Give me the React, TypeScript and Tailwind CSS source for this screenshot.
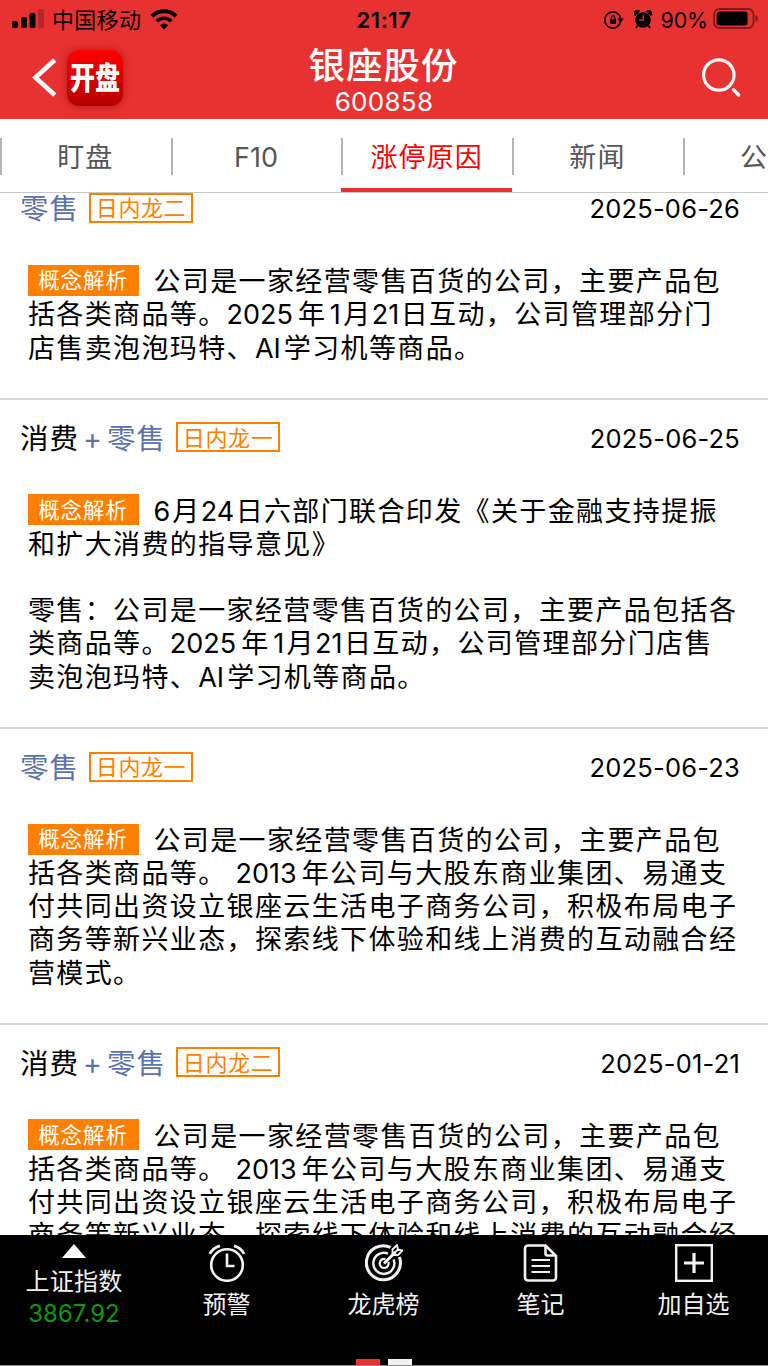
import type { ReactNode } from "react";

const TABS = ["盯盘", "F10", "涨停原因", "新闻", "公告"];

type Item = {
  lead?: string;
  badge: string;
  date: string;
  lines: string[];
};

const ITEMS: Item[] = [
  {
    badge: "日内龙二",
    date: "2025-06-26",
    lines: [
      "公司是一家经营零售百货的公司，主要产品包",
      "括各类商品等。2025年1月21日互动，公司管理部分门",
      "店售卖泡泡玛特、AI学习机等商品。",
    ],
  },
  {
    lead: "消费",
    badge: "日内龙一",
    date: "2025-06-25",
    lines: [
      "6月24日六部门联合印发《关于金融支持提振",
      "和扩大消费的指导意见》",
      "",
      "零售：公司是一家经营零售百货的公司，主要产品包括各",
      "类商品等。2025年1月21日互动，公司管理部分门店售",
      "卖泡泡玛特、AI学习机等商品。",
    ],
  },
  {
    badge: "日内龙一",
    date: "2025-06-23",
    lines: [
      "公司是一家经营零售百货的公司，主要产品包",
      "括各类商品等。 2013年公司与大股东商业集团、易通支",
      "付共同出资设立银座云生活电子商务公司，积极布局电子",
      "商务等新兴业态，探索线下体验和线上消费的互动融合经",
      "营模式。",
    ],
  },
  {
    lead: "消费",
    badge: "日内龙二",
    date: "2025-01-21",
    lines: [
      "公司是一家经营零售百货的公司，主要产品包",
      "括各类商品等。 2013年公司与大股东商业集团、易通支",
      "付共同出资设立银座云生活电子商务公司，积极布局电子",
      "商务等新兴业态，探索线下体验和线上消费的互动融合经",
      "营模式。",
    ],
  },
];

function StatusBar() {
  return (
    <div className="grid h-10 grid-cols-3 items-center pl-3 pr-[9px] text-black">
      <div className="flex items-center">
        <svg className="-mt-0.5" width="32" height="20" viewBox="0 0 32 20" aria-hidden="true">
          <rect x="0" y="12" width="6" height="7" rx="1.8" />
          <rect x="9" y="8" width="6" height="11" rx="1.8" />
          <rect x="17.500" y="4" width="6" height="15" rx="1.8" />
          <rect x="26" y="0" width="6" height="19" rx="1.8" opacity="0.22" />
        </svg>
        <span className="ml-2 text-[22px] leading-10 tracking-[0.3px]">中国移动</span>
        <svg className="ml-2 -mt-[3px]" width="30" height="22" viewBox="0 0 30 22" aria-hidden="true">
          <path d="M3 8.200a17.300 17.300 0 0 1 24 0" fill="none" stroke="#000" strokeWidth="4" />
          <path d="M7.700 13.200a10.400 10.400 0 0 1 14.600 0" fill="none" stroke="#000" strokeWidth="3.600" />
          <path d="M15 21.500l-4.200-4.300a6.200 6.200 0 0 1 8.400 0z" />
        </svg>
      </div>
      <span className="pr-[3px] text-center text-[22px] font-semibold leading-10 tracking-[0.6px]">21:17</span>
      <div className="flex items-center justify-end">
        <svg width="20" height="18" viewBox="0 0 20 18" aria-hidden="true">
          <path d="M13.300 15.600a8 8 0 1 1 3.300-8.200" fill="none" stroke="#000" strokeWidth="1.700" />
          <path d="M16.500 9.200a8 8 0 0 1-3 6.300" fill="none" stroke="#000" strokeWidth="1.700" />
          <path d="M13.400 7.400h6.400l-3.200 4.200z" />
          <rect x="5.900" y="8" width="6.200" height="5" rx="0.800" />
          <path d="M7.200 8.400v-1.700a1.800 1.800 0 0 1 3.600 0v1.700" fill="none" stroke="#000" strokeWidth="1.200" />
        </svg>
        <svg className="ml-2.5 -mt-0.5" width="18" height="19" viewBox="0 0 18 19" aria-hidden="true">
          <circle cx="9" cy="10" r="7.800" />
          <path d="M1 5.500A3 3 0 0 1 5.600 1.200zM17 5.500A3 3 0 0 0 12.400 1.200z" stroke="#000" />
          <path d="M3.600 15.500l-1.800 2.600M14.400 15.500l1.800 2.600" stroke="#000" strokeWidth="1.600" />
          <path d="M9.300 5v5.200H5" fill="none" stroke="#e83231" strokeWidth="1.300" />
        </svg>
        <span className="ml-[9px] text-[21.500px] leading-10 tracking-[-0.2px]">90%</span>
        <svg className="ml-[5px] -mt-[3px]" width="46" height="21" viewBox="0 0 46 21" aria-hidden="true">
          <rect x="1" y="1" width="39.500" height="19" rx="5.500" fill="none" stroke="#000" strokeOpacity="0.45" strokeWidth="1.800" />
          <rect x="3.600" y="3.600" width="31" height="13.800" rx="3" />
          <path d="M42.500 7v7c3.200-1.300 3.200-5.700 0-7z" opacity="0.450" />
        </svg>
      </div>
    </div>
  );
}

function TitleBar() {
  return (
    <div className="grid h-[79px] grid-cols-3 text-white">
      <div className="flex items-start pl-8 pt-2.5">
        <svg className="mt-[8px]" width="26" height="39" viewBox="0 0 26 39" aria-hidden="true">
          <path d="M22.800 2 3.400 19.500 22.800 37" fill="none" stroke="#fff" strokeWidth="4.600" />
        </svg>
        <div className="ml-[9px] flex size-14 items-center justify-center rounded-xl bg-linear-to-b from-[#ff0000] to-[#b40000] shadow-[0_0_8px_rgba(120,0,0,0.5)]">
          <span className="scale-y-[1.230] whitespace-nowrap pt-px text-[25px] font-black leading-none">开盘</span>
        </div>
      </div>
      <div className="flex flex-col items-center">
        <h1 className="mt-[7px] pr-px text-[36.500px] font-medium leading-[39px] tracking-[1px]">银座股份</h1>
        <span className="text-[26px] leading-8 tracking-[0.300px]">600858</span>
      </div>
      <div className="flex items-start justify-end pr-6 pt-[17px]">
        <svg width="44" height="44" viewBox="0 0 44 44" fill="none" stroke="#f7f7f7" aria-hidden="true">
          <circle cx="18.800" cy="18" r="15.200" strokeWidth="3.200" />
          <path d="M33.500 32.800l5.200 5.200" strokeWidth="3.400" strokeLinecap="round" />
        </svg>
      </div>
    </div>
  );
}

function TabBar() {
  return (
    <nav className="h-[74px] w-full overflow-hidden border-b border-[#c8c8c8] bg-white">
      <div className="flex h-full w-[854px]">
        {TABS.map((tab) => {
          const active = tab === "涨停原因";
          return (
            <a
              key={tab}
              href="#"
              className={`flex w-[170.700px] flex-col ${active ? "text-[#ff0000]" : "text-[#555]"}`}
            >
              <span className="mt-[19px] flex h-[37px] items-center justify-center border-l-2 border-[#b4b4b4] pr-0.5 pt-1 text-[27px] tracking-[1.100px]">
                {tab === "F10" ? <span className="tracking-normal">{tab}</span> : tab}
              </span>
              {active && <span className="mt-[13px] h-1 bg-[#e83231]" />}
            </a>
          );
        })}
      </div>
    </nav>
  );
}

function latinSpacing(run: string) {
  if (run.length >= 4) return "mr-[5px]";
  if (run === "1") return "ml-[3.500px] mr-[2.500px]";
  if (run === "6") return "mr-[2px]";
  if (run === "AI") return "mr-[3px]";
  return "mr-[1.500px]";
}

// Digits and latin words are set tighter than the Chinese around them.
function BodyText({ text }: { text: string }) {
  return (
    <span>
      {text.split(/([0-9A-Za-z]+)/).map((run, i) =>
        i % 2 === 1 ? (
          <span key={i} className={`tracking-normal ${latinSpacing(run)}`}>
            {run}
          </span>
        ) : (
          run
        ),
      )}
    </span>
  );
}

function ReasonItem({ lead, badge, date, lines }: Item) {
  return (
    <article className="border-t-2 border-[#d6d6d6] pb-[32.600px]">
      <header className="flex h-[73px] items-center pl-5 pr-7 pt-0.5">
        <h2 className="flex items-center pt-[3px] text-[28.500px] leading-10 tracking-[1px] text-[#5b72ad]">
          {lead && <span className="text-black">{lead}</span>}
          {lead && <span className="w-[28px] text-center">+</span>}
          <span>零售</span>
        </h2>
        <span className="ml-[10px] flex h-[30px] w-[104px] items-center justify-center border-2 border-[#ff8000] pt-0.5 text-[22px] tracking-[0.600px] text-[#ff8000]">
          {badge}
        </span>
        <time className="ml-auto pt-[3px] text-[25.500px] tracking-[0.200px]">{date}</time>
      </header>
      <div className="whitespace-pre pl-7 pt-[22.400px] text-[27px] tracking-[1.370px]">
        {lines.map((line, i) => (
          <p key={i} className="flex h-[33.200px] items-center">
            {i === 0 && (
              <span className="mb-1 mr-[14.500px] flex h-[31px] w-[111px] shrink-0 items-center justify-center bg-[#ff8000] pr-px text-[21.500px] tracking-[0.900px] text-white">
                概念解析
              </span>
            )}
            <BodyText text={line} />
          </p>
        ))}
      </div>
    </article>
  );
}

function FooterButton({ label, className, children }: { label: string; className: string; children: ReactNode }) {
  return (
    <button className={`flex flex-col items-center pt-[9px] ${className}`}>
      {children}
      <span className="mt-[5px] pr-px text-[24px] leading-[36px]">{label}</span>
    </button>
  );
}

function Footer() {
  return (
    <footer className="flex h-[131px] flex-col border-b border-[#8c8c8c] bg-black text-[#f2f2f2]">
      <div className="flex flex-1">
        <button className="flex w-[148px] flex-col items-center pt-[9px]">
          <svg width="24" height="14" viewBox="0 0 24 14" aria-hidden="true">
            <path d="M12 0 24 14H0z" fill="#fff" />
          </svg>
          <span className="mt-2 text-[24px] leading-8 tracking-[0.200px]">上证指数</span>
          <span className="text-[24px] leading-[31px] text-[#0a9b0a]">3867.92</span>
        </button>
        <FooterButton label="预警" className="w-[158px]">
          <svg width="38" height="38" viewBox="0 0 38 38" fill="none" stroke="#f2f2f2" aria-hidden="true">
            <circle cx="19" cy="21" r="15.800" strokeWidth="2.600" />
            <path d="M19 9.500v12.500h7.500" strokeWidth="2.600" />
            <path d="M1.800 9.800C4 5.800 7.500 2.800 12 1.800M36.200 9.800C34 5.800 30.500 2.800 26 1.800" strokeWidth="2.800" />
          </svg>
        </FooterButton>
        <FooterButton label="龙虎榜" className="w-[156px]">
          <svg width="38" height="38" viewBox="0 0 38 38" fill="none" stroke="#f2f2f2" aria-hidden="true">
            <path d="M25.500 3.300A17 17 0 1 0 34.400 13" strokeWidth="3" />
            <path d="M23 9.700A10.500 10.500 0 1 0 28.600 15.500" strokeWidth="2.400" />
            <path d="M20.500 15.200A4.500 4.500 0 1 0 23.400 18" strokeWidth="2.200" />
            <path d="M19 19.500 30.500 8" strokeWidth="3" />
            <path d="M27.500 10.500V5.500L32 1l1 4.500 4.500 1L33 11h-5M28.800 9.500 33 5.500" strokeWidth="1.900" />
          </svg>
        </FooterButton>
        <FooterButton label="笔记" className="w-[158px]">
          <svg width="38" height="38" viewBox="0 0 38 38" fill="none" stroke="#f2f2f2" aria-hidden="true">
            <path d="M23.500 1.500H6a3 3 0 0 0-3 3v29a3 3 0 0 0 3 3h25a3 3 0 0 0 3-3V12L23.500 1.500v8a2 2 0 0 0 2 2H34" strokeWidth="2.600" strokeLinejoin="round" />
            <path d="M9.500 16H28M9.500 22H28M9.500 28H28" strokeWidth="2.200" />
          </svg>
        </FooterButton>
        <FooterButton label="加自选" className="w-[148px]">
          <svg width="38" height="38" viewBox="0 0 38 38" fill="none" stroke="#f2f2f2" aria-hidden="true">
            <rect x="1.200" y="1.200" width="35.600" height="35.600" strokeWidth="2.400" />
            <path d="M19 9v20M9 19h20" strokeWidth="3.200" />
          </svg>
        </FooterButton>
      </div>
      <div className="flex justify-center gap-2">
        <span className="h-1.5 w-6 bg-[#e83231]" />
        <span className="h-1.5 w-6 bg-[#f2f2f2]" />
      </div>
    </footer>
  );
}

export default function App() {
  return (
    <div
      lang="zh-CN"
      className="flex h-[1366px] w-[768px] flex-col overflow-hidden bg-white font-['Inter','Noto_Sans_CJK_SC',sans-serif] text-black"
    >
      <div className="shrink-0 bg-[#e83231]">
        <StatusBar />
        <TitleBar />
      </div>
      <TabBar />
      <main className="min-h-0 flex-1 overflow-hidden">
        <div className="-mt-[24.600px]">
          {ITEMS.map((item) => (
            <ReasonItem key={item.date} {...item} />
          ))}
        </div>
      </main>
      <Footer />
    </div>
  );
}
